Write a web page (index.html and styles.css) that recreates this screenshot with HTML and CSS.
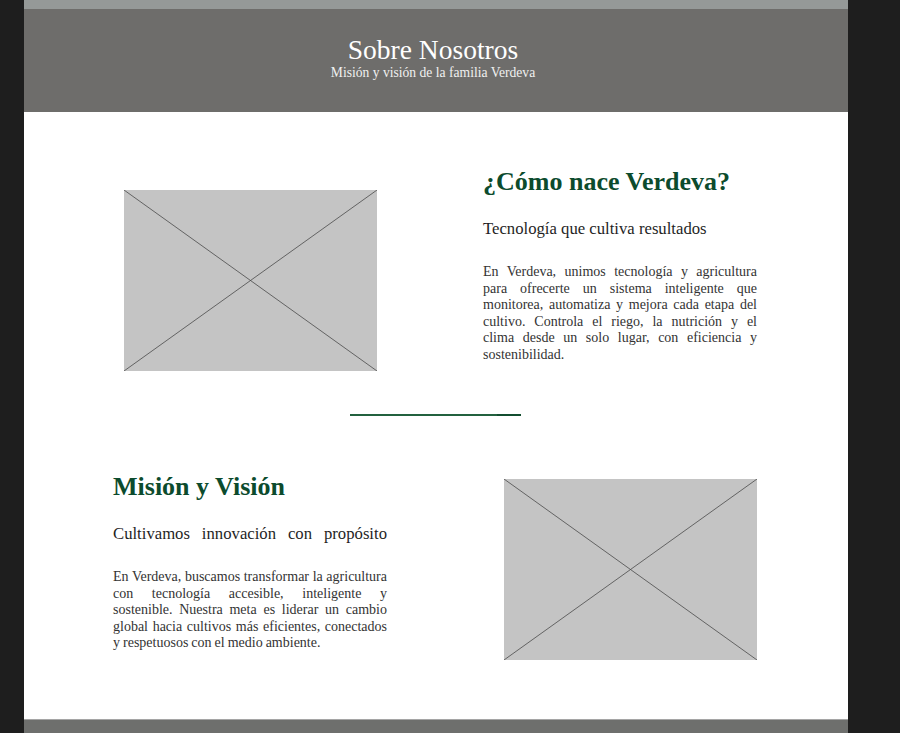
FILE: index.html
```html
<!DOCTYPE html>
<html lang="es">
<head>
<meta charset="utf-8">
<title>Sobre Nosotros</title>
<link rel="stylesheet" href="styles.css">
</head>
<body>
<div class="page">
  <div class="topbar"></div>
  <header class="hero">
    <h1 class="hero-title">Sobre Nosotros</h1>
    <p class="hero-sub">Misión y visión de la familia Verdeva</p>
  </header>
  <main class="content">
    <section class="row row-first">
      <div class="col col-media">
        <svg class="placeholder" viewBox="0 0 253 181" preserveAspectRatio="none">
          <rect x="0" y="0" width="253" height="181" fill="#c4c4c4"/>
          <line x1="0" y1="0" x2="253" y2="181" stroke="#4a4a4a" stroke-width="0.8"/>
          <line x1="253" y1="0" x2="0" y2="181" stroke="#4a4a4a" stroke-width="0.8"/>
        </svg>
      </div>
      <div class="col col-text">
        <h2 class="section-title">¿Cómo nace Verdeva?</h2>
        <h3 class="section-sub">Tecnología que cultiva resultados</h3>
        <p class="section-body">
          <span class="ln">En Verdeva, unimos tecnología y agricultura</span>
          <span class="ln">para ofrecerte un sistema inteligente que</span>
          <span class="ln">monitorea, automatiza y mejora cada etapa del</span>
          <span class="ln">cultivo. Controla el riego, la nutrición y el</span>
          <span class="ln">clima desde un solo lugar, con eficiencia y</span>
          <span class="ln last">sostenibilidad.</span>
        </p>
      </div>
    </section>
    <div class="divider"></div>
    <section class="row row-second">
      <div class="col col-text">
        <h2 class="section-title">Misión y Visión</h2>
        <h3 class="section-sub justified">Cultivamos innovación con propósito</h3>
        <p class="section-body">
          <span class="ln">En Verdeva, buscamos transformar la agricultura</span>
          <span class="ln">con tecnología accesible, inteligente y</span>
          <span class="ln">sostenible. Nuestra meta es liderar un cambio</span>
          <span class="ln">global hacia cultivos más eficientes, conectados</span>
          <span class="ln last">y respetuosos con el medio ambiente.</span>
        </p>
      </div>
      <div class="col col-media col-media-right">
        <svg class="placeholder" viewBox="0 0 253 181" preserveAspectRatio="none">
          <rect x="0" y="0" width="253" height="181" fill="#c4c4c4"/>
          <line x1="0" y1="0" x2="253" y2="181" stroke="#4a4a4a" stroke-width="0.8"/>
          <line x1="253" y1="0" x2="0" y2="181" stroke="#4a4a4a" stroke-width="0.8"/>
        </svg>
      </div>
    </section>
  </main>
  <footer class="footer"></footer>
</div>
</body>
</html>
```
FILE: styles.css
```css
* { box-sizing: border-box; }
html, body { margin: 0; padding: 0; }
body {
  background: #1e1e1e;
  font-family: "Liberation Serif", "DejaVu Serif", serif;
  color: #333;
  height: 733px;
  overflow: hidden;
}
.page {
  width: 824px;
  margin-left: 24px;
  display: flex;
  flex-direction: column;
  height: 733px;
}
.topbar { height: 9px; background: #959998; }
.hero {
  height: 103px;
  background: #6e6d6b;
  display: flex;
  flex-direction: column;
  align-items: center;
  padding: 26px 6px 0 0;
  color: #fff;
}
.hero-title {
  margin: 0;
  font-weight: normal;
  font-size: 27.5px;
  line-height: 30px;
}
.hero-sub {
  margin: 0;
  font-size: 13.6px;
  line-height: 15px;
  color: #f0f0f0;
}
.content {
  background: #fff;
  height: 607px;
  padding: 0 91px 0 89px;
}
.row {
  display: flex;
  gap: 96px;
}
.col { width: 274px; flex: none; }
.row-first { padding-top: 55px; }
.row-first .col-media { padding-top: 23px; display: flex; justify-content: center; }
.row-second { padding-top: 56px; }
.col-media-right { display: flex; justify-content: flex-end; padding-top: 7px; }
.placeholder { width: 253px; height: 181px; display: block; }
.section-title {
  margin: 0;
  font-size: 26px;
  line-height: 30px;
  color: #0c4b2d;
  font-weight: bold;
}
.section-sub {
  margin: 22px 0 0;
  font-size: 16.7px;
  line-height: 20px;
  font-weight: normal;
  color: #1f1f1f;
}
.section-sub.justified { text-align: justify; text-align-last: justify; }
.section-body {
  margin: 25px 0 0;
  font-size: 14px;
  line-height: 16.6px;
  word-spacing: -1.5px;
  color: #333;
}
.ln {
  display: block;
  white-space: nowrap;
  text-align: justify;
  text-align-last: justify;
}
.ln.last { text-align-last: left; word-spacing: -0.5px; }
.divider {
  position: relative;
  width: 171px;
  height: 2px;
  background: #23613f;
  margin: 43px 0 0 237px;
}
.divider::after {
  content: "";
  position: absolute;
  right: 0;
  top: 0;
  width: 24px;
  height: 2px;
  background: #134e30;
}
.footer {
  flex: 1;
  background: #6e6f6d;
  border-top: 1px solid #a5a5a5;
}
```
